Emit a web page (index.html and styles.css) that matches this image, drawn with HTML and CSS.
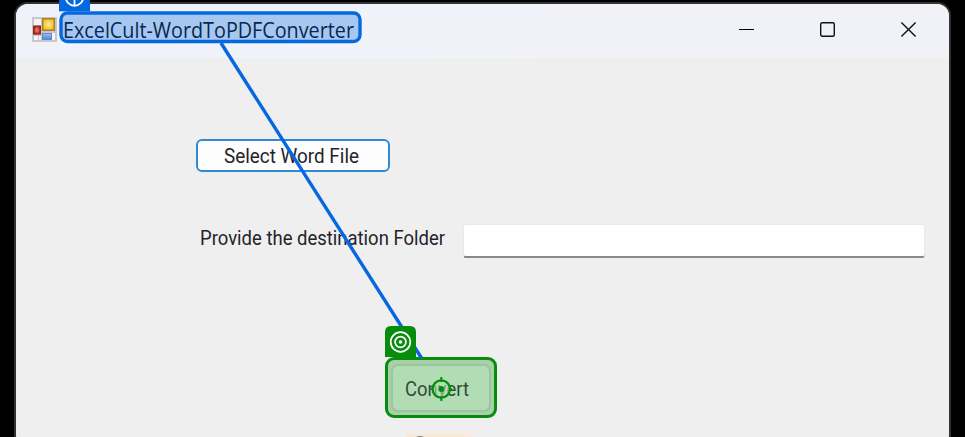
FILE: index.html
```
<!DOCTYPE html>
<html lang="en">
<head>
<meta charset="utf-8">
<title>ExcelCult-WordToPDFConverter</title>
<link rel="stylesheet" href="styles.css">
</head>
<body>
<main class="window">
  <header class="titlebar">
    <svg class="app-icon" width="25" height="25" viewBox="0 0 25 25">
      <defs>
        <radialGradient id="gold"><stop offset="0" stop-color="#ffeb9a"/><stop offset="1" stop-color="#f2bc2c"/></radialGradient>
        <radialGradient id="red"><stop offset="0" stop-color="#f08a78"/><stop offset="1" stop-color="#c62416"/></radialGradient>
        <linearGradient id="blue" x2="0" y2="1"><stop offset="0" stop-color="#9cc0f8"/><stop offset="1" stop-color="#4f82dc"/></linearGradient>
      </defs>
      <rect width="25" height="25" fill="#c7c7c9"/>
      <path d="M2 2h7v6H2zM2 19h4v4H2zM7 19h2v4H7zM20 16h3v7h-3z" fill="#f4f4f7"/>
      <rect x="10.7" y="1.7" width="11.6" height="11.6" fill="url(#gold)" stroke="#a8801c" stroke-width="1.4"/>
      <rect x="1.7" y="9.2" width="6.6" height="7.8" fill="url(#red)" stroke="#8c1c16" stroke-width="1.2"/>
      <rect x="10.5" y="16.5" width="9" height="6" fill="url(#blue)" stroke="#6688c8"/>
    </svg>
    <svg class="title" width="303" height="38">
      <rect x="2" y="2" width="299" height="28.5" rx="6.5" fill="#a6c8f0" stroke="#0568e0" stroke-width="3.4"/>
      <text x="4" y="27" textLength="291" lengthAdjust="spacingAndGlyphs">ExcelCult-WordToPDFConverter</text>
    </svg>
    <nav class="controls">
      <svg width="15" height="15"><path d="M0 7.5H15" stroke="#000"/></svg>
      <svg width="15" height="15"><rect x=".7" y=".7" width="13.6" height="13.6" rx="1.5" fill="none" stroke="#111" stroke-width="1.4"/></svg>
      <svg width="15" height="15"><path d="M.4.4l14.2 14.2M14.6.4L.4 14.6" stroke="#111" stroke-width="1.4"/></svg>
    </nav>
  </header>
  <section class="form">
    <button class="select">
      <svg width="160" height="29"><text x="11" y="22" textLength="135" lengthAdjust="spacingAndGlyphs">Select Word File</text></svg>
    </button>
    <div class="row">
      <svg width="260" height="30"><text x="3" y="20.5" textLength="245" lengthAdjust="spacingAndGlyphs">Provide the destination Folder</text></svg>
      <div class="field"></div>
    </div>
    <div class="target">
      <button class="convert">
        <svg width="76" height="30"><text x="2" y="23" textLength="64" lengthAdjust="spacingAndGlyphs">Convert</text></svg>
      </button>
    </div>
    <div class="status"><svg width="66" height="4"><path d="M9 4.2q5-2.4 10 0" fill="none" stroke="#555" stroke-width="1.5"/></svg></div>
  </section>
</main>
<svg class="overlay" width="965" height="437">
  <path d="M221 43L421.5 358" stroke="#0568e0" stroke-width="3.4"/>
  <rect x="59" y="-10" width="31" height="21.3" fill="#0568e0"/>
  <g fill="none" stroke="#fff" stroke-width="1.8"><circle cx="74.5" cy="-3" r="8.8"/><path d="M74.5-8V5.5"/></g>
  <path d="M385 357V332q0-6 6-6h19q6 0 6 6v25z" fill="#078c0c"/>
  <g fill="none" stroke="#fff" stroke-width="1.7"><circle cx="400.5" cy="342" r="9.8"/><circle cx="400.5" cy="342" r="5.4"/></g>
  <circle cx="400.5" cy="342" r="1.8" fill="#fff"/>
  <circle cx="441.3" cy="389" r="8.7" fill="#b3ddb5" fill-opacity=".6" stroke="#078c0c" stroke-width="2.2"/>
  <circle cx="441.3" cy="389" r="2.9" fill="#078c0c"/>
  <path d="M441.3 377v5M441.3 396v5M430.5 389h3M449 389h3" stroke="#078c0c" stroke-width="2"/>
</svg>
</body>
</html>
```
FILE: styles.css
```
* { box-sizing: border-box; }
body { margin: 0; width: 965px; height: 437px; overflow: hidden; background: #000; font-family: "Open Sans", sans-serif; }
svg { display: block; flex: none; overflow: visible; }
.window { width: 937px; height: 447px; margin: 2px 0 0 14px; border: 2px solid #333335; border-radius: 14px; background: #efefef; overflow: hidden; }
.titlebar { height: 54px; display: flex; align-items: flex-start; background: linear-gradient(90deg, #eff3f9, #f1f2f8); }
.app-icon { margin: 13px 0 0 16px; }
.title { margin: 7px 0 0 2px; }
.title text { font-size: 21px; fill: #082750; }
.controls { display: flex; gap: 66px; margin: 18px 33px 0 auto; }
.form { font-family: Roboto, sans-serif; }
.form text { font-size: 20.5px; fill: #25232b; }
button { display: flex; align-items: center; justify-content: center; padding: 0; font: inherit; }
.select { width: 194px; height: 33px; margin: 81px 0 0 180px; background: #fdfdfd; border: 2px solid #3389cf; border-radius: 6px; }
.row { display: flex; margin: 52px 0 0 181px; }
.field { width: 462px; height: 34px; margin-left: 6px; background: #fff; border: 1px solid #e9e9e9; border-bottom: 2px solid #888; border-radius: 3px; }
.target { width: 112px; height: 61px; margin: 99px 0 0 369px; padding: 4px 3px 3px; border: 3px solid #078c0c; border-radius: 9px; background: #a8d1aa; }
.convert { width: 100px; height: 48px; background: #b2ddb4; border: 2px solid #9cc49e; border-radius: 7px; }
.convert text { fill: #304b36; }
.status { width: 65px; height: 20px; margin: 16px 0 0 390px; background: #fce9d4; }
.overlay { position: absolute; inset: 0; pointer-events: none; overflow: hidden; }
```
